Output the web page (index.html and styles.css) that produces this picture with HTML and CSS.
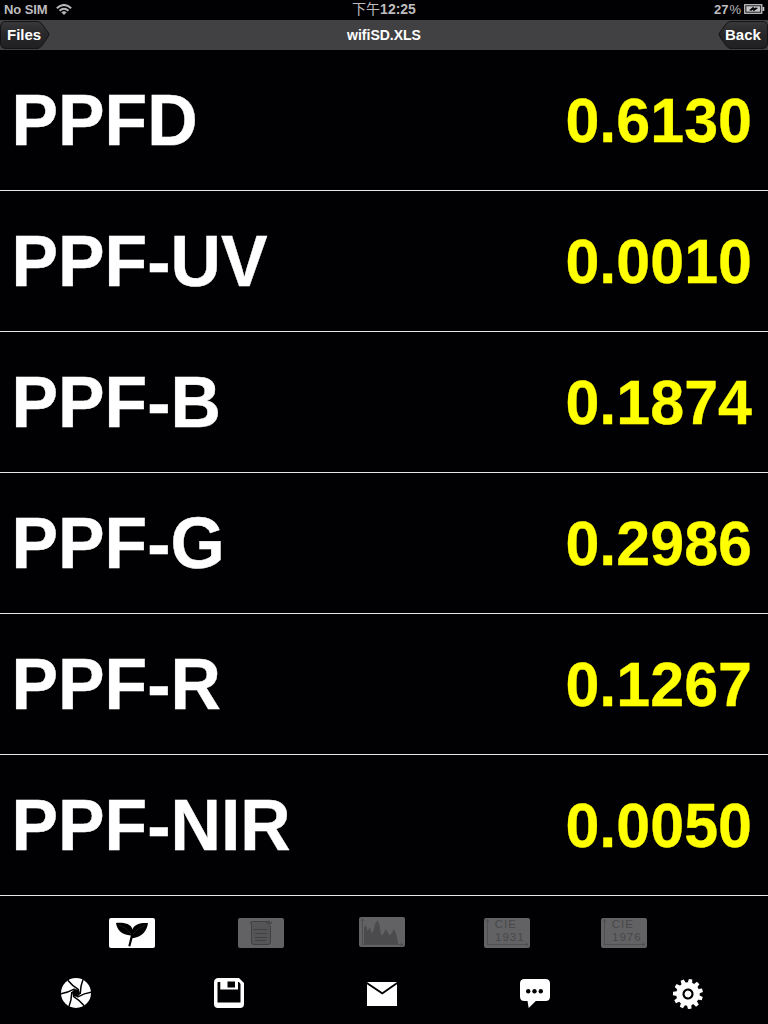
FILE: index.html
```html
<!DOCTYPE html>
<html lang="zh-Hant">
<head>
<meta charset="utf-8">
<title>wifiSD.XLS</title>
<link rel="stylesheet" href="styles.css">
</head>
<body>
<div class="screen">
  <header class="status">
    <div class="carrier"><span>No SIM</span>
      <svg class="wifi" viewBox="0 0 16 11"><g fill="none" stroke="#b9b9bb" stroke-width="1.9"><path d="M.8 4.2Q8-2.3 15.2 4.2"/><path d="M3.5 6.8Q8 2.8 12.5 6.8"/></g><path fill="#b9b9bb" d="M5.4 8.3Q8 6.1 10.6 8.3L8 11Z"/></svg>
    </div>
    <div class="clock"><span class="period">下午</span>12:25</div>
    <div class="power"><span class="percent">27<span class="sign">%</span></span>
      <svg class="battery" viewBox="0 0 21 10"><rect x=".75" y=".75" width="17" height="8.5" fill="none" stroke="#c6c6c8" stroke-width="1.3"/><path fill="#c6c6c8" d="M2.3 2.3h14v5.4h-14zM18.5 3h1.8v4h-1.8z"/><path fill="#000" d="M5 6.3 9.6 2.5 9.9 4.5 11.5 3.4 14 3.9 9.4 7.5 9.1 5.5 7.5 6.8z"/></svg>
    </div>
  </header>
  <nav class="navbar">
    <a class="nav-button files"><svg viewBox="0 0 50 30"><defs><linearGradient id="f" x2="0" y2="1"><stop offset="0" stop-color="#38383a"/><stop offset=".5" stop-color="#272729"/><stop offset="1" stop-color="#202022"/></linearGradient></defs><path fill="url(#f)" stroke="#141416" d="M6 1.5H37Q40 1.5 42 4L48.5 13Q49.5 14.5 48.5 16L42 25.5Q40 28.5 37 28.5H6Q.5 28.5.5 23V7Q.5 1.5 6 1.5Z"/></svg><span>Files</span></a>
    <h1 class="title">wifiSD.XLS</h1>
    <a class="nav-button back"><svg viewBox="0 0 50 30"><path fill="url(#f)" stroke="#141416" d="M44 1.5H13Q10 1.5 8 4L1.5 13Q.5 14.5 1.5 16L8 25.5Q10 28.5 13 28.5H44Q49.5 28.5 49.5 23V7Q49.5 1.5 44 1.5Z"/></svg><span>Back</span></a>
  </nav>
  <main class="readings">
    <div class="row"><span class="name">PPFD</span><span class="value">0.6130</span></div>
    <div class="row"><span class="name">PPF-UV</span><span class="value">0.0010</span></div>
    <div class="row"><span class="name">PPF-B</span><span class="value">0.1874</span></div>
    <div class="row"><span class="name">PPF-G</span><span class="value">0.2986</span></div>
    <div class="row"><span class="name">PPF-R</span><span class="value">0.1267</span></div>
    <div class="row"><span class="name">PPF-NIR</span><span class="value">0.0050</span></div>
  </main>
  <div class="modes">
    <div class="mode active">
      <svg viewBox="0 0 46 30"><path fill="#000" d="M7 5C13 4.5 22 5 23.4 11.5C25 6 32 4.5 39 5C38 13 33 19 23.5 20.3L21.3 28.5 19.3 28 21.8 17.5C13 17 8 12 7 5Z"/><path d="M10 7Q17 9 22 16M36 7Q29 10 24 16" fill="none" stroke="#252525" stroke-width=".7"/></svg>
    </div>
    <div class="mode report">
      <svg viewBox="0 0 46 30"><path fill="#555557" d="M12 3.5H34V6H32.5V24Q32.5 26.5 30 26.5H15.5Q13.5 26.5 13.5 24V6H12Z"/><g fill="none" stroke="#404042"><path d="M12.5 6V5Q12.5 3.5 15 3.5H30M32.5 8V24Q32.5 26.5 30 26.5H15.5Q13.5 26.5 13.5 24V6"/><path d="M15 11.5H29M17 15.5H29M17 19.5H29M17 22.5H28"/></g><path fill="#48484a" d="M31 1.5 32 4 35 5 32 6 31 8 30 6 27 5 30 4Z"/></svg>
    </div>
    <div class="mode spectrum">
      <svg viewBox="0 0 46 30"><path fill="#4b4b4d" d="M5 27V11L7 8 8.5 14 11 10 12.5 16 14.5 14 16 7 18.5 3 20.5 8 22 18 23.5 18 27 12 30 18 31.5 18 35 12 37.5 18 39 26V27Z"/><path d="M3.5 3V27.5H44M2 4 3.5 1.5 5 4M41.5 25.5 44 27.5 41.5 29" fill="none" stroke="#49494b" stroke-width=".8"/></svg>
    </div>
    <div class="mode cie1931">
      <svg viewBox="0 0 46 30"><path d="M3.5 2V26.5H44M2 4 3.5 1.5 5 4M41.5 24.5 44 26.5 41.5 28.5" fill="none" stroke="#4b4b4d" stroke-width=".8"/><text x="10.8" y="10.4">CIE</text><text x="11" y="22.8">1931</text></svg>
    </div>
    <div class="mode cie1976">
      <svg viewBox="0 0 46 30"><path d="M3.5 2V26.5H44M2 4 3.5 1.5 5 4M41.5 24.5 44 26.5 41.5 28.5" fill="none" stroke="#4b4b4d" stroke-width=".8"/><text x="10.8" y="10.4">CIE</text><text x="11" y="22.8">1976</text></svg>
    </div>
  </div>
  <footer class="actions">
    <svg viewBox="0 0 30 30"><g transform="translate(15 15)"><circle r="15" fill="#fff"/><path fill="#000" d="M4.2 1 1.2 4.1-3 3.1-4.2-1-1.2-4.1 3-3.1Z"/><path id="b" fill="none" stroke="#000" stroke-width="1.5" d="M7-13.5Q4.5-7.5 4.2 1"/><use href="#b" transform="rotate(60)"/><use href="#b" transform="rotate(120)"/><use href="#b" transform="rotate(180)"/><use href="#b" transform="rotate(240)"/><use href="#b" transform="rotate(300)"/></g></svg>
    <svg viewBox="0 0 30 30"><path fill="#fff" fill-rule="evenodd" d="M4.5 0H25L30 5V26Q30 30 26 30H4Q0 30 0 26V4.5Q0 0 4.5 0ZM4 4Q3.5 4 3.5 5V24.5H26.5V6L25 4H24V11.5H6.3V4ZM13.5 3.5V9.5H21V3.5Z"/></svg>
    <svg viewBox="0 0 30 30"><path fill="#fff" d="M0 4H30L15.3 14.3ZM0 6.3 15.3 16.6 30 6.3V28H0Z"/></svg>
    <svg viewBox="0 0 30 30"><path fill="#fff" d="M4.5 1H25.5Q30 1 30 5.5V18.5Q30 23 25.5 23H15.8L8.7 30 7.5 23H4.5Q0 23 0 18.5V5.5Q0 1 4.5 1Z"/><g fill="#000"><circle cx="8.2" cy="13.2" r="2.2"/><circle cx="14.5" cy="13.2" r="2.2"/><circle cx="20.8" cy="13.2" r="2.2"/></g></svg>
    <svg class="gear" viewBox="0 0 30 30"><g transform="translate(15 16) rotate(10)"><g fill="#fff"><circle r="11.7"/><path id="t" d="M-2.3-11-1.7-15H1.7L2.3-11Z"/><use href="#t" transform="rotate(32.7)"/><use href="#t" transform="rotate(65.5)"/><use href="#t" transform="rotate(98.2)"/><use href="#t" transform="rotate(130.9)"/><use href="#t" transform="rotate(163.6)"/><use href="#t" transform="rotate(196.4)"/><use href="#t" transform="rotate(229.1)"/><use href="#t" transform="rotate(261.8)"/><use href="#t" transform="rotate(294.5)"/><use href="#t" transform="rotate(327.3)"/></g><circle r="4.5" fill="#fff" stroke="#000" stroke-width="2.2"/></g></svg>
  </footer>
</div>
</body>
</html>
```
FILE: styles.css
```css
* { box-sizing: border-box; }
body {
  margin: 0;
  background: #000;
  color: #fff;
  font-family: "Liberation Sans", "Noto Sans CJK TC", sans-serif;
}
svg { display: block; }
.screen { width: 768px; height: 1024px; overflow: hidden; background: #010003; }
.status {
  height: 20px;
  display: grid;
  grid-template-columns: 1fr auto 1fr;
  color: #bdbdbf;
  font-size: 13px;
  font-weight: bold;
  line-height: 19px;
}
.carrier { display: flex; padding-left: 4px; gap: 9px; letter-spacing: -.1px; }
.wifi { width: 16px; height: 11px; margin-top: 4px; }
.clock { font-size: 14px; white-space: nowrap; }
.period { font-weight: normal; }
.power { display: flex; justify-content: flex-end; padding-right: 3px; gap: 3px; }
.sign { margin-left: 1px; font-weight: normal; }
.battery { width: 21px; height: 10px; margin-top: 4px; }
.navbar {
  height: 30px;
  display: grid;
  grid-template-columns: 50px 1fr 50px;
  background: #414143;
}
.nav-button { display: grid; font-size: 15px; font-weight: bold; line-height: 30px; }
.nav-button > * { grid-area: 1 / 1; }
.nav-button svg { width: 50px; height: 30px; }
.nav-button span { padding-left: 7px; }
.title { margin: 0; font-size: 14px; line-height: 31px; text-align: center; }
.row {
  height: 141px;
  border-bottom: 1px solid #e8e8e8;
  padding: 1px 16px 0 11.5px;
  display: flex;
  justify-content: space-between;
  align-items: center;
  font-weight: bold;
  font-kerning: none;
}
.name, .value { display: block; line-height: 80px; transform: scaleY(1.045); transform-origin: 0 calc(50% + .3465em); }
.name { font-size: 69.8px; -webkit-text-stroke: .4px #fff; }
.value { font-size: 61px; color: #ff0; -webkit-text-stroke: .3px #ff0; }
.modes { height: 67px; padding: 22px 0 0 109px; display: flex; }
.mode { width: 46px; height: 30px; border-radius: 2px; background: #626264; }
.mode svg { width: 46px; height: 30px; }
.mode.active { background: #fff; }
.report { margin-left: 83px; }
.spectrum { margin: -1px 0 0 75px; }
.cie1931 { margin-left: 79px; }
.cie1976 { margin-left: 71px; }
.mode text { font-size: 11.5px; fill: #48484a; letter-spacing: 1px; }
.actions { padding: 15px 65px 0 61px; display: flex; justify-content: space-between; }
.actions svg { width: 30px; height: 30px; }
.actions .gear { overflow: visible; }
```
